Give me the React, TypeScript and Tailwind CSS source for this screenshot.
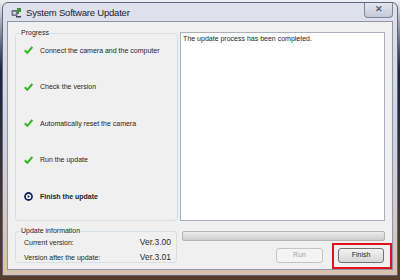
import React from 'react';

const font = { fontFamily: '"Liberation Sans", Arial, sans-serif' };

const steps = [
  { label: 'Connect the camera and the computer', done: true },
  { label: 'Check the version', done: true },
  { label: 'Automatically reset the camera', done: true },
  { label: 'Run the update', done: true },
  { label: 'Finish the update', done: false },
];

const Check: React.FC = () => (
  <svg width="9" height="8" viewBox="0 0 9 8">
    <path d="M0.8 4.2 L3.3 6.9 L8.3 1" fill="none" stroke="#2fb81f" strokeWidth="2" strokeLinejoin="round" />
  </svg>
);

const Current: React.FC = () => (
  <svg width="9" height="9" viewBox="0 0 9 9">
    <circle cx="4.5" cy="4.5" r="4.4" fill="#15265e" />
    <circle cx="4.5" cy="4.5" r="2.6" fill="#ffffff" />
    <path d="M3.7 3 L6.1 4.5 L3.7 6 Z" fill="#15265e" />
  </svg>
);

const AppIcon: React.FC = () => (
  <svg width="11" height="11" viewBox="0 0 11 11">
    <rect x="0.5" y="3" width="6" height="6" rx="1" fill="#6b7486" />
    <circle cx="3.5" cy="6" r="1.6" fill="#d9dde6" />
    <path d="M6 1 L10 1 L10 5 L8 5 L8 7 L6 7 Z" fill="#3f8f3a" />
    <path d="M5 9 L10 9 L10 10.5 L5 10.5 Z" fill="#34445e" />
  </svg>
);

const GroupBox: React.FC<{ title: string; className: string; children: React.ReactNode }> = ({ title, className, children }) => (
  <div className={`relative rounded-[3px] border border-[#d5dfe5] ${className}`}>
    <span className="absolute left-[4px] top-[-6px] bg-[#f0f0f0] px-[1px] text-[7px] leading-[10px] text-[#1e1e1e]">
      {title}
    </span>
    {children}
  </div>
);

const App: React.FC = () => {
  return (
    <div
      className="relative h-[280px] w-[400px] overflow-hidden bg-gradient-to-b from-[#eef0f4] via-[#1b233d] via-[25%] to-[#5a3d2a]"
      style={font}
    >
      {/* Window frame */}
      <div className="ml-[2px] mt-[2px] flex h-[274px] w-[396px] flex-col rounded-t-[6px] border border-[#5f687c] bg-gradient-to-b from-[#dfe2ed] via-[#cfd2e2] to-[#d9c2ae] px-[4px] pb-[5px]">
        {/* Title bar */}
        <div className="flex h-[18px] items-center">
          <div className="ml-[4px] flex w-[11px] items-center">
            <AppIcon />
          </div>
          <span className="ml-[4px] mt-[1px] text-[9.5px] leading-none tracking-[-0.2px] text-[#1a1a2a]">System Software Updater</span>
          <div className="ml-auto flex h-[15px] w-[29px] -translate-y-[2px] items-center justify-center rounded-b-[4px] border border-t-0 border-[#7e8597] bg-gradient-to-b from-[#e3e5ee] to-[#c6c9d8] text-[9px] font-bold leading-none text-[#5c6070]">
            ✕
          </div>
        </div>

        {/* Client area */}
        <div className="flex flex-1 flex-col border border-[#8e96a8] bg-[#f0f0f0] px-[7px] pt-[10px]">
          <div className="flex h-[189px] gap-[2px]">
            <GroupBox title="Progress" className="mt-[1px] w-[164px]">
              <div className="flex flex-col gap-[24.6px] pl-[8px] pt-[10px]">
                {steps.map((s) => (
                  <div key={s.label} className="flex h-[12px] items-center gap-[7px]">
                    <div className="flex w-[9px] items-center justify-center">{s.done ? <Check /> : <Current />}</div>
                    <span className={`text-[7px] leading-none text-[#1e1e1e] ${s.done ? '' : 'font-bold'}`}>{s.label}</span>
                  </div>
                ))}
              </div>
            </GroupBox>
            <div className="w-[206px] border border-[#aab0bb] bg-white pl-[2px] pt-[1px] text-[7px] leading-[9px] text-[#1e1e1e]">
              The update process has been completed.
            </div>
          </div>

          <div className="mt-[10px] flex">
            <GroupBox title="Update information" className="h-[32px] w-[162px]">
              <div className="flex flex-col gap-[5px] pl-[8px] pr-[5px] pt-[5px]">
                <div className="flex h-[10px] items-center justify-between">
                  <span className="text-[7px] leading-none text-[#1e1e1e]">Current version:</span>
                  <span className="text-[8.5px] leading-none text-[#2a2a2a]">Ver.3.00</span>
                </div>
                <div className="flex h-[10px] items-center justify-between">
                  <span className="text-[7px] leading-none text-[#1e1e1e]">Version after the update:</span>
                  <span className="text-[8.5px] leading-none text-[#2a2a2a]">Ver.3.01</span>
                </div>
              </div>
            </GroupBox>

            <div className="ml-[5px] flex w-[203px] flex-col">
              <div className="h-[10px] rounded-[2px] border border-[#b4b4b4] bg-gradient-to-b from-[#ececec] to-[#cdcdcd]" />
              <div className="mt-[7px] flex justify-end gap-[15px] pr-[1px]">
                <div className="flex h-[15px] w-[47px] items-center justify-center rounded-[3px] border border-[#c5c5c5] bg-[#f4f4f4] text-[7px] text-[#a3a3a3]">
                  Run
                </div>
                <div className="relative flex h-[15px] w-[46px] items-center justify-center rounded-[3px] border border-[#707070] bg-gradient-to-b from-[#f3f3f3] to-[#d6d6d6] text-[7px] text-[#1e1e1e]">
                  Finish
                  {/* annotation highlight */}
                  <div className="absolute left-[-7px] top-[-6px] h-[26px] w-[60px] border-[2.5px] border-[#e2101a]" />
                </div>
              </div>
            </div>
          </div>
        </div>
      </div>
    </div>
  );
};

export default App;
